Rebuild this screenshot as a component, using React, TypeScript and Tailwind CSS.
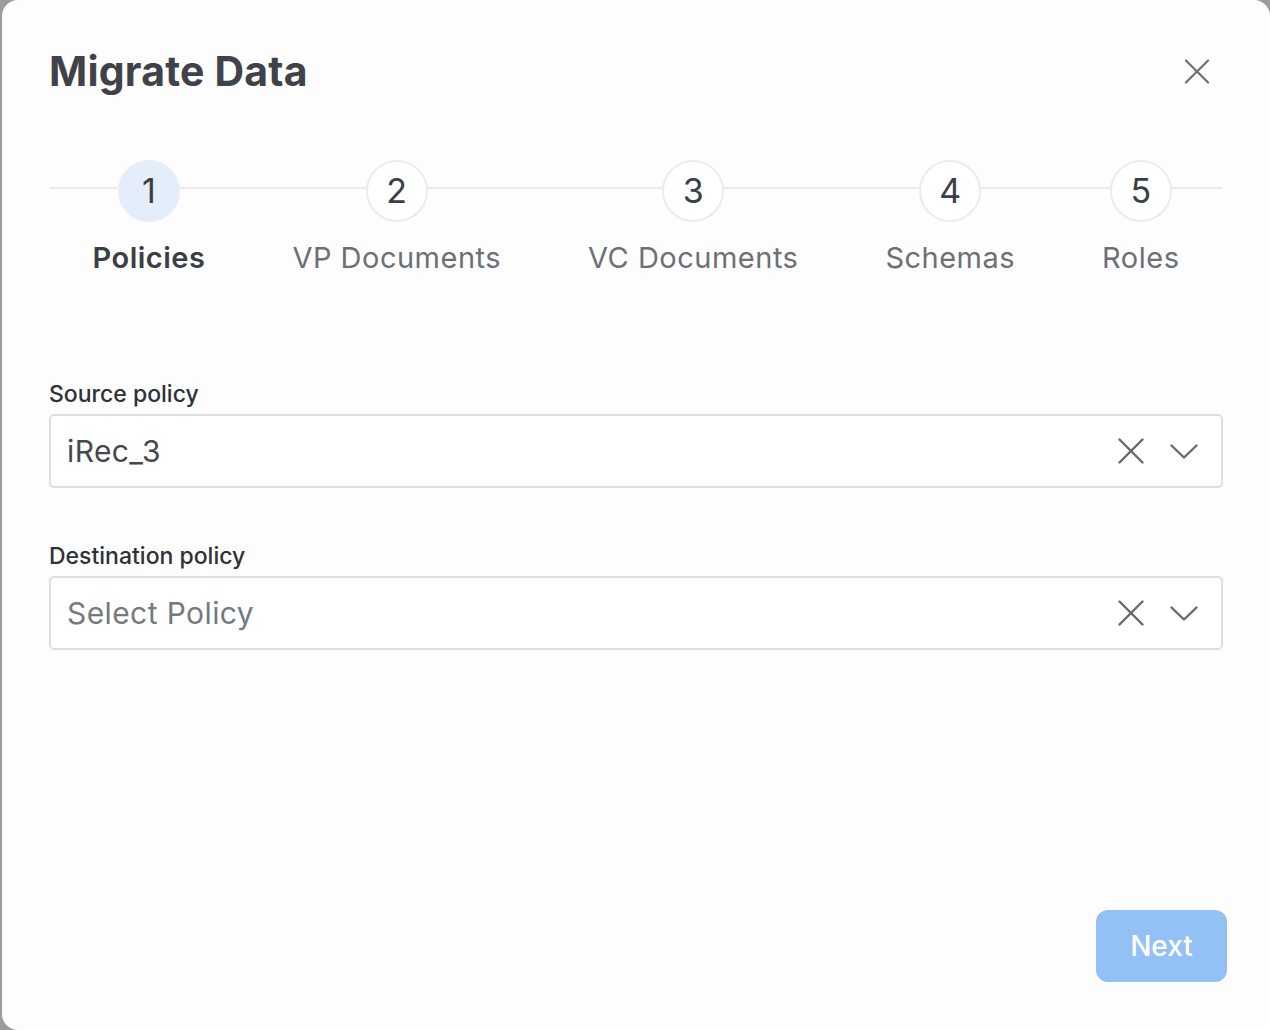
import React from "react";
import clsx from "clsx";

type StepItem = {
  n: number;
  label: string;
  active?: boolean;
};

const steps: StepItem[] = [
  { n: 1, label: "Policies", active: true },
  { n: 2, label: "VP Documents" },
  { n: 3, label: "VC Documents" },
  { n: 4, label: "Schemas" },
  { n: 5, label: "Roles" },
];

const CrossIcon = ({ className, stroke = 2.4 }: { className?: string; stroke?: number }) => (
  <svg viewBox="0 0 26 26" className={className} fill="none" stroke="currentColor" strokeWidth={stroke} strokeLinecap="round">
    <path d="M1.5 1.5 24.5 24.5" />
    <path d="M24.5 1.5 1.5 24.5" />
  </svg>
);

const ChevronIcon = ({ className }: { className?: string }) => (
  <svg viewBox="0 0 28 15" className={className} fill="none" stroke="currentColor" strokeWidth={2.4} strokeLinecap="round" strokeLinejoin="round">
    <path d="M1.5 1.5 14 13.5 26.5 1.5" />
  </svg>
);

const Step = ({ n, label, active }: StepItem) => (
  <div className="flex grow flex-col items-center">
    <div className="flex w-full items-start">
      <div className="mt-[27px] h-[2px] flex-1 bg-[#ebebeb]" />
      <div
        className={clsx(
          "flex h-[62px] w-[62px] shrink-0 items-center justify-center rounded-full text-[34px] leading-none text-[#3b3f45]",
          {
            "bg-[#e3eefa]": active,
            "border-2 border-[#ececec] bg-white": !active,
          }
        )}
      >
        {n}
      </div>
      <div className="mt-[27px] h-[2px] flex-1 bg-[#ebebeb]" />
    </div>
    <div
      className={clsx("mt-[19px] whitespace-nowrap px-[40px] text-[29px] leading-[34px] tracking-[0.5px]", {
        "font-semibold text-[#3b3f45]": active,
        "text-[#6c7076]": !active,
      })}
    >
      {label}
    </div>
  </div>
);

type SelectFieldProps = {
  label: string;
  value?: string;
  placeholder: string;
};

const SelectField = ({ label, value, placeholder }: SelectFieldProps) => (
  <div className="flex flex-col">
    <label className="text-[23px] font-medium leading-[26px] text-[#2e3136]">{label}</label>
    <div className="mt-[7px] flex h-[74px] items-center rounded-[5px] border-2 border-[#dedede] bg-white pl-[16px] pr-[23px]">
      <span
        className={clsx("flex-1 text-[30px] tracking-[0.4px]", {
          "text-[#45484d]": value,
          "text-[#76797e]": !value,
        })}
      >
        {value ?? placeholder}
      </span>
      <CrossIcon className="h-[26px] w-[26px] text-[#66696e]" />
      <ChevronIcon className="ml-[26px] h-[15px] w-[28px] text-[#66696e]" />
    </div>
  </div>
);

export default function App() {
  return (
    <div className="h-[1030px] w-[1270px] overflow-hidden bg-[#9c9c9c] font-['Inter',sans-serif]">
      <div className="ml-[2px] flex h-[1030px] w-[1268px] flex-col rounded-t-[16px] rounded-bl-[16px] bg-[#fdfdfd] px-[47px]">
        {/* header */}
        <div className="flex items-center justify-between pt-[48px]">
          <h1 className="text-[41px] font-bold leading-[46px] tracking-[0.2px] text-[#3f4349]">Migrate Data</h1>
          <button aria-label="Close" className="mr-[13px] text-[#6b6e73]">
            <CrossIcon className="h-[25px] w-[26px]" stroke={2.2} />
          </button>
        </div>

        {/* stepper */}
        <div className="mt-[66px] flex">
          {steps.map((s) => (
            <Step key={s.n} {...s} />
          ))}
        </div>

        {/* form */}
        <div className="mt-[106px] flex flex-col gap-[55px]">
          <SelectField label="Source policy" value="iRec_3" placeholder="Select Policy" />
          <SelectField label="Destination policy" placeholder="Select Policy" />
        </div>

        <div className="mt-auto flex justify-end pb-[48px]">
          <button className="-mr-[4px] h-[72px] w-[131px] rounded-[12px] bg-[#93c1f5] text-[28px] font-medium text-white">
            Next
          </button>
        </div>
      </div>
    </div>
  );
}
